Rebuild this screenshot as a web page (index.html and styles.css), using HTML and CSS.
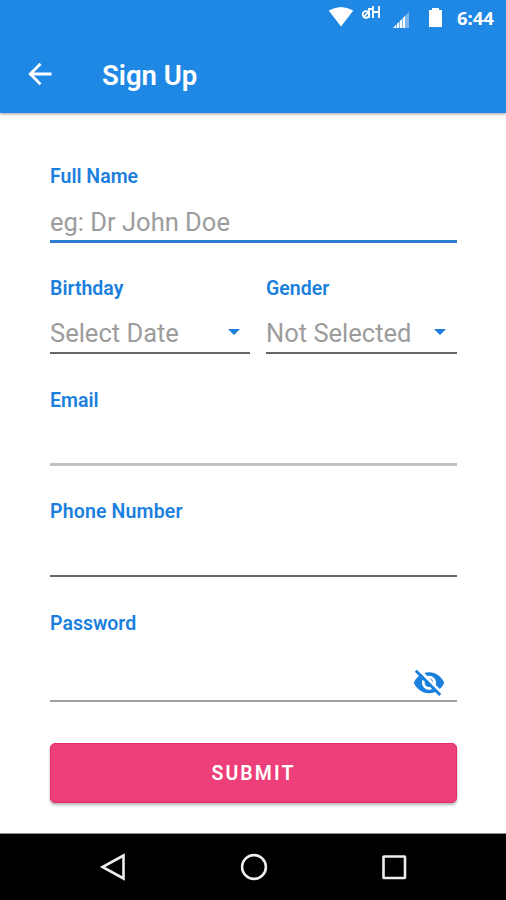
FILE: index.html
```html
<!DOCTYPE html>
<html lang="en">
<head>
    <meta charset="UTF-8">
    <meta name="viewport" content="width=device-width, initial-scale=1.0">
    <title>Sign Up</title>
    <link rel="stylesheet" href="styles.css">
</head>
<body>
    <div class="page">
        <header class="header">
            <div class="status">
                <svg class="wifi" width="26" height="20" viewBox="0 0 26 20"><path d="M.7 3.6Q13-3.6 25.3 3.6L13 19.5z"/></svg>
                <svg class="net" width="20" height="16" viewBox="0 0 20 16"><circle cx="5" cy="9.5" r="3.3"/><path d="M2.5 12.5L8 6M8 3v10M12 1v12M18 1v12M7 4h4M12 7h6"/></svg>
                <svg class="signal" width="18" height="18" viewBox="0 0 18 18"><path class="faint" d="M17 1v16H1z"/><path d="M1 17l3-3v3zM5 17v-4l2-2v6zM8 17v-7l2-2v9zM11 17V7l2-2v12z"/></svg>
                <svg class="battery" width="15" height="20" viewBox="0 0 15 20"><path d="M1 2h3V0h7v2h3v17H1z"/></svg>
                <span class="time">6:44</span>
            </div>
            <div class="bar">
                <svg class="back" width="24" height="24" viewBox="0 0 24 24"><path d="M23.5 12H2M12.5 1.8L2.3 12l10.2 10.2"/></svg>
                <h1>Sign Up</h1>
            </div>
        </header>
        <form class="form">
            <div class="field">
                <label>Full Name</label>
                <div class="value active"><span class="name">eg: Dr John Doe</span></div>
            </div>
            <div class="row">
                <div class="field">
                    <label>Birthday</label>
                    <div class="value"><span class="date">Select Date</span><i class="arrow"></i></div>
                </div>
                <div class="field">
                    <label>Gender</label>
                    <div class="value"><span class="sex">Not Selected</span><i class="arrow"></i></div>
                </div>
            </div>
            <div class="field">
                <label>Email</label>
                <div class="value light"></div>
            </div>
            <div class="field">
                <label class="phone">Phone Number</label>
                <div class="value"></div>
            </div>
            <div class="field">
                <label>Password</label>
                <div class="value password">
                    <svg class="eye" width="32" height="28" viewBox="0 0 32 28">
                        <path class="lid" d="M.8 13.8C3.5 7.5 9 3.3 16 3.3s12.5 4.2 15.2 10.5C28.5 20.1 23 24.3 16 24.3S3.5 20.1.8 13.8z"/>
                        <circle class="ring" cx="16" cy="13.8" r="5.7"/>
                        <path class="gap" d="M5.5 0L29.5 25"/>
                        <path class="slash" d="M2.8 1.7L27.2 26"/>
                    </svg>
                </div>
            </div>
            <button type="button" class="submit">SUBMIT</button>
        </form>
        <nav class="nav">
            <svg width="28" height="28" viewBox="0 0 28 28"><path d="M24.5 2.5v23L3.5 14z"/></svg>
            <svg width="28" height="28" viewBox="0 0 28 28"><circle cx="14" cy="14" r="11.9"/></svg>
            <svg width="28" height="28" viewBox="0 0 28 28"><rect x="3.5" y="3.5" width="21.5" height="21.5" rx=".5"/></svg>
        </nav>
    </div>
</body>
</html>
```
FILE: styles.css
```css
*{
    margin:0;
    padding:0;
    box-sizing:border-box;
}
body{
    font-family:Roboto, "Liberation Sans", sans-serif;
    background-color:#fff;
}
.page{
    display:flex;
    flex-direction:column;
    height:900px;
    overflow:hidden;
}
svg{
    display:block;
    flex:none;
}
.header{
    height:113px;
    background-color:#1f88e5;
    box-shadow:0 1px 3px rgba(0,0,0,.4);
}
.status{
    display:flex;
    justify-content:flex-end;
    height:37px;
    padding:7px 10px 0 0;
    fill:#fff;
}
.net{
    margin:-2px 0 0 7px;
    fill:none;
    stroke:#fff;
    stroke-width:1.8;
}
.signal{
    margin:4px 0 0 11px;
}
.faint{
    opacity:.4;
}
.battery{
    margin:1px 0 0 18px;
}
.time{
    margin-left:14px;
    width:39px;
    font:bold 18.5px/22px "Noto Sans", sans-serif;
    color:#fff;
}
.bar{
    display:flex;
    align-items:center;
    height:76px;
    padding-left:28px;
}
.back{
    margin-top:-3px;
    fill:none;
    stroke:#fff;
    stroke-width:2.8;
}
.bar h1{
    margin-top:1px;
    margin-left:50px;
    font-size:27.5px;
    font-weight:600;
    line-height:32px;
    color:#fff;
}
.form{
    flex:1;
    padding:52px 49px 0 50px;
}
.field{
    height:111.8px;
}
.row{
    display:grid;
    grid-template-columns:200px 1fr;
    column-gap:16px;
}
label{
    display:block;
    height:24px;
    font-size:19.5px;
    font-weight:600;
    line-height:24px;
    color:#1b7fdd;
}
.phone{
    letter-spacing:.15px;
}
.value{
    display:flex;
    justify-content:space-between;
    align-items:center;
    height:53px;
    padding-right:10px;
    padding-top:14px;
    border-bottom:2px solid #666;
    font-size:25.5px;
    line-height:30px;
    color:#9c9c9c;
}
.row .field:last-child .value{
    padding-right:11px;
}
.value.active{
    height:54px;
    border-bottom:3px solid #2c7fd0;
}
.value.light{
    border-bottom:3px solid #c2c2c2;
}
.value.password{
    height:66px;
    padding:30px 12px 0 0;
    justify-content:flex-end;
    border-color:#a0a0a0;
}
.arrow{
    margin-top:-2px;
    border:6.5px solid transparent;
    border-top-color:#1b7fdd;
    border-bottom:0;
}
.lid{
    fill:#1b7fdd;
}
.ring{
    fill:#1b7fdd;
    stroke:#fff;
    stroke-width:2.8;
}
.gap,.slash{
    fill:none;
    stroke:#fff;
    stroke-width:3;
}
.slash{
    stroke:#1b7fdd;
}
.submit{
    display:block;
    width:407px;
    height:60px;
    margin-top:19px;
    padding-top:2px;
    border:1px solid #e52a70;
    border-radius:5px;
    background-color:#ed407a;
    box-shadow:0 2px 3px rgba(0,0,0,.3);
    font:600 19.5px/56px Roboto, sans-serif;
    letter-spacing:2.1px;
    color:#fff;
}
.nav{
    display:flex;
    justify-content:space-between;
    height:67px;
    padding:19px 98px 0 99px;
    border-top:1px solid #888;
    background-color:#000;
    fill:none;
    stroke:#eee;
    stroke-width:2.6;
}
```
